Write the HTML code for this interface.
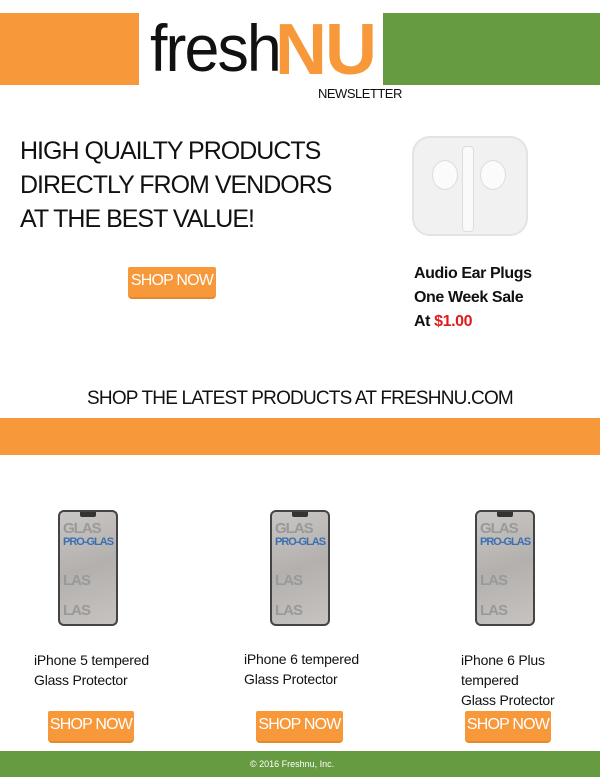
<!DOCTYPE html>
<html><head><style>
*{margin:0;padding:0;box-sizing:border-box}
body{width:600px;height:780px;background:#fff;position:relative;overflow:hidden;font-family:"Liberation Sans",sans-serif;color:#111}
.a{position:absolute;white-space:nowrap}
.btn{position:absolute;background:#f7993a;color:#fff;font-size:16px;text-align:center;line-height:28px;height:30px;border-radius:2px 2px 4px 4px;box-shadow:0 2px 0 #e58a2c;letter-spacing:-0.8px;white-space:nowrap;overflow:hidden}
.ph{position:absolute;width:60px;height:116px;border:2px solid #444;border-radius:6px;background:linear-gradient(160deg,#c9c6c4,#b3b0ae 50%,#c6c3c1);overflow:hidden}
.ph:before{content:"";position:absolute;left:20px;top:-2px;width:16px;height:7px;background:#333;border-radius:2px}
.ph span{position:absolute;left:3px;font-size:15px;color:#999;letter-spacing:-1px;font-weight:bold}
.pt{position:absolute;font-size:14px;line-height:20px;color:#111;letter-spacing:-0.2px}
</style></head><body>
<div class="a" style="left:0;top:13px;width:139px;height:72px;background:#f7993a"></div>
<div class="a" style="left:383px;top:13px;width:217px;height:72px;background:#669b41"></div>
<div class="a" style="left:150px;top:10px;font-size:66px;letter-spacing:-2px;line-height:76px;color:#111;-webkit-text-stroke:0;transform:scaleX(0.95);transform-origin:left">fresh</div>
<div class="a" style="left:275px;top:11px;font-size:72px;font-weight:bold;letter-spacing:-2px;line-height:78px;color:#f7993a">NU</div>
<div class="a" style="left:318px;top:86px;font-size:13px;letter-spacing:-0.5px">NEWSLETTER</div>
<div class="a" style="left:20px;top:134px;font-size:25px;line-height:34px;letter-spacing:-1px">HIGH QUAILTY PRODUCTS<br>DIRECTLY FROM VENDORS<br>AT THE BEST VALUE!</div>
<div class="btn" style="left:128px;top:267px;width:88px">SHOP NOW</div>
<div class="a" style="left:412px;top:136px;width:116px;height:100px;border-radius:18px;background:#f1f1f1;border:2px solid #e3e3e3"></div>
<div class="a" style="left:462px;top:146px;width:12px;height:86px;background:#fafafa;border:1px solid #ddd;border-radius:4px"></div>
<div class="a" style="left:432px;top:160px;width:26px;height:30px;border-radius:50%;background:#fbfbfb;border:1px solid #ddd"></div>
<div class="a" style="left:480px;top:160px;width:26px;height:30px;border-radius:50%;background:#fbfbfb;border:1px solid #ddd"></div>
<div class="a" style="left:414px;top:262px;font-size:16px;font-weight:bold;line-height:24px;letter-spacing:-0.4px">Audio Ear Plugs<br>One Week Sale<br>At <span style="color:#e01b1b">$1.00</span></div>
<div class="a" style="left:0;top:388px;width:600px;text-align:center;font-size:19px;letter-spacing:-0.8px">SHOP THE LATEST PRODUCTS AT FRESHNU.COM</div>
<div class="a" style="left:0;top:418px;width:600px;height:37px;background:#f7993a"></div>
<div class="ph" style="left:58px;top:510px"><span style="top:8px">GLAS</span><span style="top:24px;color:#3a6fb0;font-size:11px">PRO-GLAS</span><span style="top:60px">LAS</span><span style="top:90px">LAS</span></div>
<div class="ph" style="left:270px;top:510px"><span style="top:8px">GLAS</span><span style="top:24px;color:#3a6fb0;font-size:11px">PRO-GLAS</span><span style="top:60px">LAS</span><span style="top:90px">LAS</span></div>
<div class="ph" style="left:475px;top:510px"><span style="top:8px">GLAS</span><span style="top:24px;color:#3a6fb0;font-size:11px">PRO-GLAS</span><span style="top:60px">LAS</span><span style="top:90px">LAS</span></div>
<div class="pt" style="left:34px;top:650px">iPhone 5 tempered<br>Glass Protector</div>
<div class="pt" style="left:244px;top:649px">iPhone 6 tempered<br>Glass Protector</div>
<div class="pt" style="left:461px;top:650px">iPhone 6 Plus<br>tempered<br>Glass Protector</div>
<div class="btn" style="left:48px;top:711px;width:86px">SHOP NOW</div>
<div class="btn" style="left:256px;top:711px;width:87px">SHOP NOW</div>
<div class="btn" style="left:465px;top:711px;width:86px">SHOP NOW</div>
<div class="a" style="left:0;top:751px;width:600px;height:26px;background:#669b41;color:#fff;font-size:9px;line-height:26px;padding-left:250px">© 2016 Freshnu, Inc.</div>
</body></html>
